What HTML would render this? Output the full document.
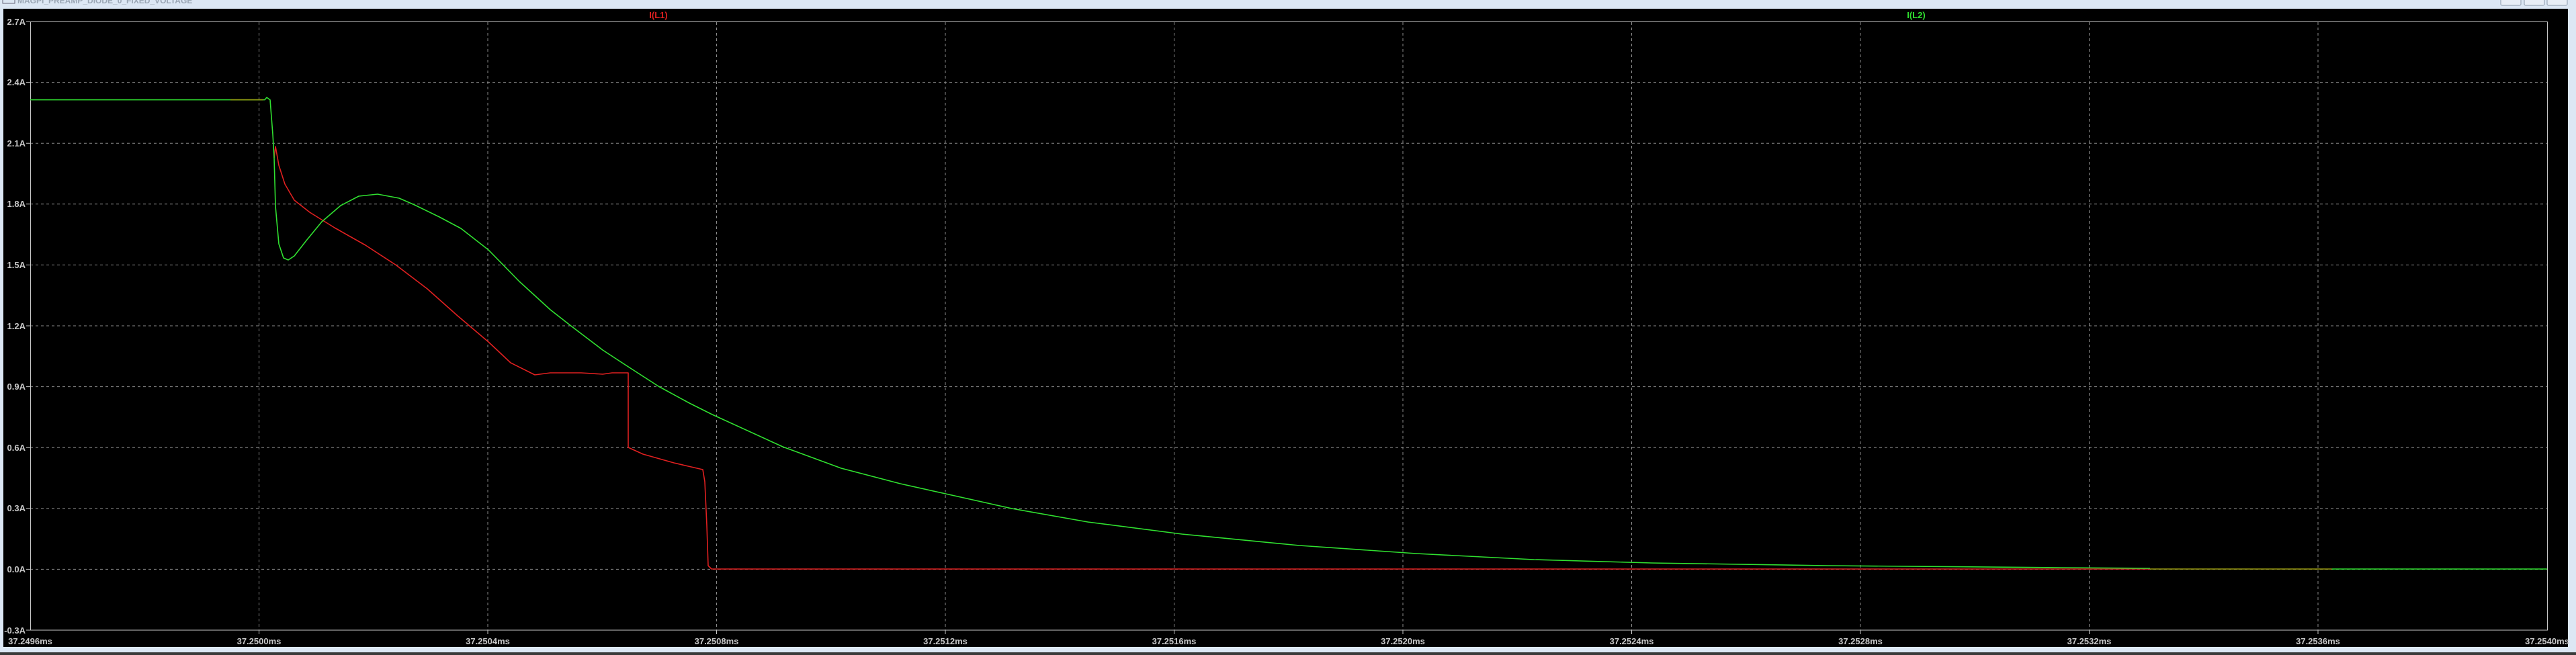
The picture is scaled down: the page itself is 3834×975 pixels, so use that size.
<!DOCTYPE html>
<html><head><meta charset="utf-8"><style>
html,body{margin:0;padding:0;background:#dce7f4;overflow:hidden}
svg{display:block}
text{font-family:"Liberation Sans",sans-serif;font-weight:bold}
</style></head><body>
<svg width="3834" height="975" viewBox="0 0 3834 975" xmlns="http://www.w3.org/2000/svg">
<rect x="0" y="0" width="3834" height="975" fill="#dce7f4"/>
<text x="26" y="5" font-size="12" fill="#9aa6b4" font-weight="normal">MAGPI_PREAMP_DIODE_0_FIXED_VOLTAGE</text>
<rect x="4" y="-4" width="18" height="9" fill="none" stroke="#667" stroke-width="1"/>
<rect x="3722" y="-6" width="30" height="14" rx="2" fill="#e8eef6" stroke="#8a98aa"/>
<rect x="3757" y="-6" width="30" height="14" rx="2" fill="#e8eef6" stroke="#8a98aa"/>
<rect x="3791" y="-6" width="30" height="14" rx="2" fill="#e8eef6" stroke="#8a98aa"/>
<rect x="5" y="13" width="3817" height="950" fill="#000"/>
<rect x="0" y="971" width="3834" height="4" fill="#3a3a3a"/>
<g stroke="#8a8a8a" stroke-width="1" stroke-dasharray="4,4" fill="none">
<path d="M385.5 33V938M726 33V938M1066.5 33V938M1407 33V938M1747.5 33V938M2088 33V938M2428.5 33V938M2769 33V938M3109.5 33V938M3450 33V938"/>
<path d="M45 122.6H3791M45 213.2H3791M45 303.8H3791M45 394.4H3791M45 485H3791M45 575.6H3791M45 666.2H3791M45 756.8H3791M45 847.4H3791"/>
</g>
<rect x="45.5" y="32.5" width="3746" height="905.5" fill="none" stroke="#c8c8c8" stroke-width="1"/>
<g stroke="#c8c8c8" stroke-width="1">
<path d="M39 32.5H45M39 122.6H45M39 213.2H45M39 303.8H45M39 394.4H45M39 485H45M39 575.6H45M39 666.2H45M39 756.8H45M39 847.4H45M39 938H45"/>
<path d="M385.5 938V944M726 938V944M1066.5 938V944M1407 938V944M1747.5 938V944M2088 938V944M2428.5 938V944M2769 938V944M3109.5 938V944M3450 938V944"/>
</g>
<g font-size="13" fill="#c8c8c8" text-anchor="end">
<text x="38" y="37">2.7A</text><text x="38" y="127">2.4A</text><text x="38" y="218">2.1A</text><text x="38" y="308">1.8A</text><text x="38" y="399">1.5A</text><text x="38" y="490">1.2A</text><text x="38" y="580">0.9A</text><text x="38" y="671">0.6A</text><text x="38" y="761">0.3A</text><text x="38" y="852">0.0A</text><text x="38" y="943">-0.3A</text>
</g>
<g font-size="13" fill="#c8c8c8" text-anchor="middle">
<text x="45" y="959">37.2496ms</text><text x="385.5" y="959">37.2500ms</text><text x="726" y="959">37.2504ms</text><text x="1066.5" y="959">37.2508ms</text><text x="1407" y="959">37.2512ms</text><text x="1747.5" y="959">37.2516ms</text><text x="2088" y="959">37.2520ms</text><text x="2428.5" y="959">37.2524ms</text><text x="2769" y="959">37.2528ms</text><text x="3109.5" y="959">37.2532ms</text><text x="3450" y="959">37.2536ms</text><text x="3791" y="959">37.2540ms</text>
</g>
<text x="980" y="27" font-size="13" fill="#e02020" text-anchor="middle">I(L1)</text>
<text x="2852" y="27" font-size="13" fill="#30e030" text-anchor="middle">I(L2)</text>
<g fill="none" stroke-width="1.6" stroke-linejoin="round">
<path stroke="#e02020" d="M408 235L410 218L415 246L424 274L438 298L461 316L498 339L544 365L590 395L636 430L681 470L727 509L760 540L796 558L819 555L865 555L897 557L911 555L935 555L935 666L957 676L1003 689L1046 699L1049 717L1052 782L1054 842L1059 847L3200 847"/>
<path stroke="#30e030" d="M45 148.6L394 148.6L397 145L402 148.6L406 200L408 235L410 307L415 363L422 384L429 387L438 381L456 358L479 330L507 306L534 292L562 289L594 295L617 305L654 323L686 340L727 372L773 419L819 461L851 486L897 521L929 542L980 575L1026 600L1060 617L1165 665L1252 697L1340 720L1506 757L1619 777L1759 795L1934 812L2108 824L2283 833L2458 838L2720 842L3069 845L3200 846"/>
<path stroke="#30e030" d="M3471 847L3791 847"/>
<path stroke="#9a9a10" d="M343 148.6L392 148.6M3200 847L3471 847"/>
</g>
</svg>
</body></html>
